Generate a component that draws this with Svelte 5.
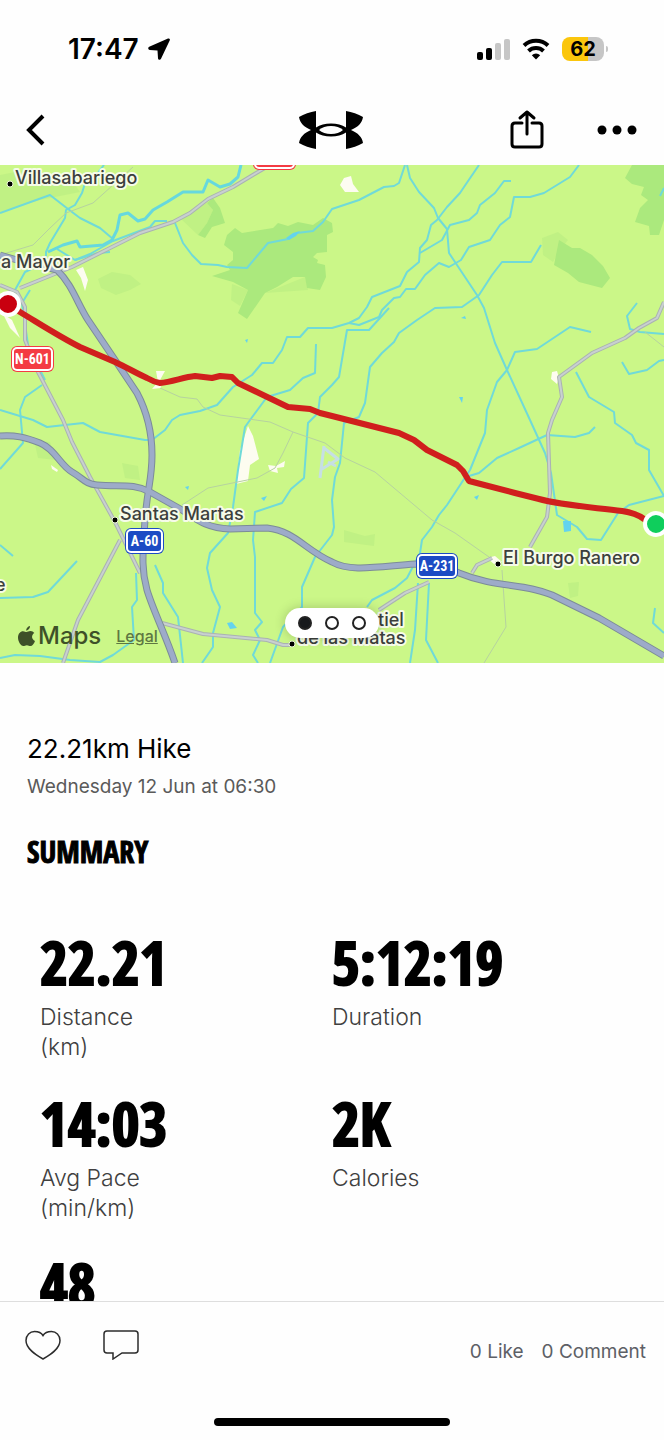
<script>
  let title = "22.21km Hike";
  let date = "Wednesday 12 Jun at 06:30";
  let likes = 0;
  let comments = 0;
  let slide = 0;
  const slides = ["Map", "Elevation", "Pace"];

  const stats = [
    { value: "22.21", label: "Distance", unit: "(km)" },
    { value: "5:12:19", label: "Duration" },
    { value: "14:03", label: "Avg Pace", unit: "(min/km)" },
    { value: "2K", label: "Calories" },
    { value: "48" }
  ];

  const woods = [
    "M212 276 230 270 227 265 233 260 233 252 224 245 227 235 235 228 242 233 273 228 278 223 288 226 298 222 313 225 323 218 332 223 333 232 327 235 327 252 317 253 313 257 318 260 317 263 325 265 326 277 320 290 307 288 305 277 293 277 277 287 265 293 247 319 238 313 248 290 233 282Z",
    "M207 203 213 198 220 208 225 223 212 227 205 238 198 235 207 223 213 210Z",
    "M559 240 572 248 580 248 592 255 603 266 610 278 602 288 579 282 568 273 554 265Z",
    "M632 165 625 178 632 184 644 187 641 195 648 200 640 208 635 222 649 226 650 235 659 235 664 220V165Z"
  ];

  const scrub = [
    "M98 279 112 272 130 275 141 284 130 290 116 295 101 288Z",
    "M542 238 558 232 568 240 560 250 553 262 543 255Z",
    "M122 463 138 466 140 480 125 478Z",
    "M344 530 365 536 375 534 374 546 344 542Z",
    "M0 175 25 170 45 184 70 178 80 192 40 200 0 212Z",
    "M180 218 207 203 213 210 207 223 198 235Z",
    "M232 284 248 290 240 306 231 300Z",
    "M265 293 305 277 308 290Z",
    "M34 440 50 442 56 460 38 458Z",
    "M568 583 579 582 578 596 570 598Z"
  ];

  const towns = [
    "M344 178 351 176 353 184 359 192 345 192 340 185Z",
    "M76 270 83 267 88 280 85 291 81 278Z",
    "M3 314 12 320 20 338 10 328Z",
    "M156 371 165 371 160 380 161 388 152 389 158 382Z",
    "M248 426 253 436 259 459 250 465 248 481 236 484 240 450Z",
    "M268 465 276 466 285 461 284 467 277 468 278 473 270 471Z",
    "M552 372 557 371 559 378 557 384 551 379Z",
    "M51 465 58 470 57 472 52 469Z",
    "M487 558 495 556 502 562 494 564Z"
  ];

  const ponds = [
    "M286 238 293 233 300 231 296 236 289 240Z",
    "M563 521 571 521 571 531 564 532Z",
    "M227 623 232 622 237 628 230 629Z",
    "M461 318 465 316 466 319Z",
    "M459 397 463 397 462 403Z",
    "M474 497 479 495 477 500Z",
    "M261 498 267 496 264 501Z",
    "M185 487 189 486 188 490Z",
    "M245 340 248 339 247 343Z"
  ];

  const streams = [
    "M0 213 50 195 68 209 80 218 100 228 113 239",
    "M104 165 97 174 87 177 82 193 75 205 66 210 65 218 50 243 46 252 46 262 25 272 15 290",
    "M167 221 155 221 150 227 113 241 90 254 75 260 57 249",
    "M75 260 98 253 110 252",
    "M30 290 22 303 28 345 35 360 45 380",
    "M175 223 183 243 192 255 201 264 218 265 227 267 247 268 268 243 288 239 297 233 313 231 323 222 332 209 359 200 384 187 394 186 399 183 405 165",
    "M407 165 410 178 419 192 434 208 438 218 447 229 449 253 457 265 477 295 484 308 495 343 507 370 530 420 545 453 551 473 557 515 577 527 587 539 601 540 618 513 629 505 664 496",
    "M479 165 464 187 460 193 447 207 437 220 431 225 427 240 420 248 419 262 407 272 400 286 372 297 367 307 359 318 349 323 332 328 308 328 300 337 287 337 282 350 273 363 262 363 252 375 233 387 217 405 200 411 180 415 172 420 165 430 152 440 145 440 100 432 83 423 47 427 33 420 0 410",
    "M511 181 504 181 495 193 480 205 477 213 469 220 450 225 442 240 420 253",
    "M579 165 570 177 544 193 530 197 514 197 510 217 500 225 490 240 469 247 461 260 449 267 439 263 425 275 415 289 406 289 400 297 394 298 382 310 379 317 359 325 349 323",
    "M389 308 369 330 347 330 339 377 332 385 320 397 318 413 308 423 304 478 291 489 282 503 255 512 253 540 255 557 255 613 262 622 255 630 260 640 253 655 258 663",
    "M541 245 531 262 502 262 492 275 479 295 462 307 435 308 417 320 399 333 394 342 382 353 370 367 365 403 359 417 344 423 340 463 335 477 332 500 334 527 332 535 315 557 302 587 302 607 283 627 270 663",
    "M591 332 570 327 537 349 515 352 507 370 497 382 487 410 485 433 470 470 447 505 439 515 432 527 422 540 420 553 407 578 395 588 372 600 367 607",
    "M595 427 589 433 575 437 547 435 519 448 497 458 479 473 469 476",
    "M637 303 627 316 630 329 640 332 664 334",
    "M622 362 629 374 647 370 659 361 664 360",
    "M576 372 589 397 614 412 615 423 632 435 636 443 649 450 649 470 664 496",
    "M316 344 315 373 303 378 290 390 267 397 250 420 245 427 238 470 233 507 228 533 210 553 207 568 212 590 220 607 213 633 213 647 202 663",
    "M42 385 25 397 20 410 23 443 0 469",
    "M0 598 33 597 48 592 77 561",
    "M155 565 163 583 163 593 178 617 183 663",
    "M136 573 137 600 132 607 134 640 113 655 100 662 70 660 40 656 15 655 0 658",
    "M0 545 13 556",
    "M418 583 415 630 410 663",
    "M429 583 426 640 438 663",
    "M655 608 653 623 664 633",
    "M664 188 660 196"
  ];

  const river = "M241 165 238 177 230 184 220 187 208 180 203 192 183 192 167 202 153 210 145 219 138 221 128 213 120 215 117 230 112 240 103 245 80 247 77 241 63 245 48 252";

  const tracks = [
    "M160 388 180 397 197 399 203 407 220 415 270 422 293 432 325 443 345 458 375 472 432 520 455 533 489 557",
    "M293 432 283 453 275 468 257 478 208 488 182 505",
    "M502 570 506 627 484 663",
    "M133 167 93 203 66 213 50 228 33 245 0 255",
    "M645 332 664 347"
  ];

  const roads = [
    "M270 165 258 172 233 187 208 199 190 213 173 222 140 233 110 248 72 267 20 288",
    "M0 285 17 292 25 307 25 340 37 370 63 420 72 442 90 477 115 522 140 573",
    "M120 540 78 620 63 663",
    "M162 623 203 634 267 640 283 645 292 645",
    "M664 302 657 318 639 328 625 338 592 353 559 377 562 397 552 420 548 433 550 493 547 517 530 547",
    "M472 573 477 565 492 558",
    "M379 610 405 593 429 582"
  ];

  const motorways = [
    "M0 255 17 260 57 270C72 284 78 305 88 320L115 360 137 393C147 412 152 430 152 455S147 490 145 520C142 560 142 572 147 590C153 610 166 636 175 663",
    "M0 436C15 435 25 437 40 443S60 465 72 472S85 484 97 485C120 487 133 483 150 492L182 510C195 518 205 528 230 529L267 528C295 531 305 550 332 562C350 572 375 567 415 564Q440 564 459 573C495 588 525 583 552 595L599 618 664 656"
  ];

  const route = "M10 305 20 312C40 324 60 337 80 347L115 362C126 367 136 373 147 378Q154 382 160 383C172 382 184 377 195 376L212 378 220 376 232 377 238 383 288 407 310 409 320 413 332 416 399 433 414 440 427 450 457 465 463 471 469 481 515 493 539 499C560 505 590 507 622 511Q636 513 644 519L656 523";

  const places = [
    { name: "Villasabariego", x: 15, y: 184, dot: [10, 184] },
    { name: "a Mayor", x: 1, y: 268 },
    { name: "Santas Martas", x: 120, y: 520, dot: [115, 520] },
    { name: "El Burgo Ranero", x: 503, y: 564, dot: [498, 564] },
    { name: "e", x: -5, y: 591 },
    { name: "tiel", x: 378, y: 626 },
    { name: "de las Matas", x: 297, y: 644, dot: [292, 644] }
  ];

  const shields = [
    { name: "N-601", x: 13, y: 348, w: 39, color: "#f43b43" },
    { name: "", x: 255, y: 146, w: 39, color: "#f43b43" },
    { name: "A-60", x: 127, y: 530, w: 35, color: "#1c4bc4" },
    { name: "A-231", x: 418, y: 555, w: 38, color: "#1c4bc4" }
  ];
</script>

<div class="screen">
  <div class="status">
    <div class="clock">
      17:47
      <svg width="24" height="24" viewBox="0 0 24 24"><path d="M21 1.600 2.200 9.800C.6 10.600 1 12.800 2.800 12.900L10.500 13.400 11 21.200C11.200 23 13.300 23.400 14 21.800L22.800 3.300C23.300 2 22.300 1 21 1.600Z" /></svg>
    </div>
    <div class="indicators">
      <svg width="34" height="22" viewBox="0 0 34 22">
        <rect x="1" y="14" width="6" height="8" rx="2" />
        <rect x="10" y="10" width="6" height="12" rx="2" />
        <rect class="off" x="19" y="5" width="6" height="17" rx="2" />
        <rect class="off" x="28" y="1" width="6" height="21" rx="2" />
      </svg>
      <svg width="28" height="22" viewBox="0 0 28 22">
        <path class="wave" d="M2 7.500A17.500 17.500 0 0 1 26 7.500M6.500 13A11 11 0 0 1 21.500 13" />
        <path d="M14 21.500 9.800 17.300A6 6 0 0 1 18.200 17.300Z" />
      </svg>
      <div class="battery"><span>62</span></div>
    </div>
  </div>

  <header>
    <button class="back" aria-label="Back">
      <svg width="20" height="32" viewBox="0 0 20 32"><path d="M18 2 4 16 18 30" /></svg>
    </button>
    <svg class="logo" width="64" height="38" viewBox="0 0 64 38">
      <path d="M17 0C11 1 5 3 0 6 1 12 5 16 12 19 5 22 1 26 0 32 5 35 11 37 17 38V21.500C21 24 26 25.500 32 25.500S43 24 47 21.500V38C53 37 59 35 64 32 63 26 59 22 52 19 59 16 63 12 64 6 59 3 53 1 47 0V16.500C43 14 38 12.500 32 12.500S21 14 17 16.500Z" />
      <path class="hole" d="M20 19C23 16.500 27 15 32 15S41 16.500 44 19C41 21.500 37 23 32 23S23 21.500 20 19Z" />
    </svg>
    <div class="actions">
      <button aria-label="Share">
        <svg width="34" height="40" viewBox="0 0 34 40"><path d="M12 13H5Q2 13 2 16V34Q2 37 5 37H29Q32 37 32 34V16Q32 13 29 13H22M17 24V2M10 8 17 2 24 8" /></svg>
      </button>
      <button aria-label="More">
        <svg width="40" height="10" viewBox="0 0 40 10"><circle cx="5" cy="5" r="4.500" /><circle cx="20" cy="5" r="4.500" /><circle cx="35" cy="5" r="4.500" /></svg>
      </button>
    </div>
  </header>

  <section class="map">
    <svg class="canvas" viewBox="0 165 664 498">
      <rect class="land" y="165" width="664" height="498" />
      {#each scrub as d}<path class="scrub" {d} />{/each}
      {#each woods as d}<path class="wood" {d} />{/each}
      {#each towns as d}<path class="town" {d} />{/each}
      {#each streams as d}<path class="stream" {d} />{/each}
      <path class="river" d={river} />
      {#each ponds as d}<path class="pond" {d} />{/each}
      <path class="airfield" d="M324 448 338 459 322 469M324 446 320 478M328 462 336 466" />
      {#each tracks as d}<path class="track" {d} />{/each}
      {#each roads as d}<path class="road-edge" {d} /><path class="road" {d} />{/each}
      {#each motorways as d}<path class="motorway-edge" {d} />{/each}
      {#each motorways as d}<path class="motorway" {d} />{/each}
      <path class="route" d={route} />

      {#each shields as s}
        <rect x={s.x - 2} y={s.y - 2} width={s.w + 4} height="26" rx="6" fill={s.color} />
        <rect class="shield" x={s.x} y={s.y} width={s.w} height="22" rx="4" fill={s.color} />
        {#if s.name}<text class="ref" x={s.x + s.w / 2} y={s.y + 16}>{s.name}</text>{/if}
      {/each}
      {#each places as p}
        {#if p.dot}<circle class="spot" cx={p.dot[0]} cy={p.dot[1]} r="3" />{/if}
        <text class="place" x={p.x} y={p.y}>{p.name}</text>
      {/each}

      <circle class="end" cx="8" cy="304" r="11" fill="#c9000f" />
      <circle class="end" cx="656" cy="524" r="11" fill="#0fce5c" />
    </svg>
    <div class="credit">
      <svg width="17" height="21" viewBox="0 0 17 21">
        <path d="M12 0C12.200 2 10.400 4.500 8.200 4.500 8 2.500 9.800.4 12 0ZM8.500 6C9.500 6 10.500 5 12.500 5 14 5 15.400 5.800 16.300 7 13 9 13.500 13.500 17 14.900 16 17.500 14.300 20 12.500 20 11.100 20 10.600 19.200 8.900 19.200S6.600 20 5.300 20C2.600 20 0 15.300 0 11.500 0 7.500 2.500 5.200 5 5.200 6.600 5.200 7.700 6 8.500 6Z" />
      </svg>
      <span>Maps</span>
      <a href="#legal">Legal</a>
    </div>
    <div class="pager">
      {#each slides as name, i}
        <button class:active={i == slide} aria-label={name} on:click={() => (slide = i)}></button>
      {/each}
    </div>
  </section>

  <main>
    <h1>{title}</h1>
    <p class="date">{date}</p>
    <h2>SUMMARY</h2>
    <div class="stats">
      {#each stats as stat}
        <div class="stat">
          <div class="value">{stat.value}</div>
          {#if stat.label}<div class="label">{stat.label}</div>{/if}
          {#if stat.unit}<div class="label">{stat.unit}</div>{/if}
        </div>
      {/each}
    </div>
  </main>

  <footer>
    <div class="bar">
      <button aria-label="Like" on:click={() => (likes = likes ? 0 : 1)}>
        <svg width="36" height="30" viewBox="0 0 36 30"><path d="M18 29C11 25 1 19 1 10.500 1 5 5 1.500 9.500 1.500 13.500 1.500 16.500 3 18 5.500 19.500 3 22.500 1.500 26.500 1.500 31 1.500 35 5 35 10.500 35 19 25 25 18 29Z" /></svg>
      </button>
      <button aria-label="Comment">
        <svg width="36" height="30" viewBox="0 0 36 30"><path d="M4 1H32Q35 1 35 4V20Q35 23 32 23H19L10 29V23H4Q1 23 1 20V4Q1 1 4 1Z" /></svg>
      </button>
      <div class="counts">
        <a href="#likes">{likes} Like</a>
        <a href="#comments">{comments} Comment</a>
      </div>
    </div>
    <div class="home"></div>
  </footer>
</div>

<style>
  :global(body) {
    background: #fefefe;
  }

  .screen {
    display: flex;
    flex-direction: column;
    height: 100vh;
    overflow: hidden;
    color: #000;
    font-family: Inter, "Liberation Sans", sans-serif;
  }

  button {
    display: flex;
    padding: 0;
    border: 0;
    background: none;
    cursor: pointer;
  }

  a {
    color: inherit;
    text-decoration: none;
  }

  svg {
    display: block;
  }

  .status {
    display: flex;
    justify-content: space-between;
    align-items: center;
    flex: none;
    height: 98px;
    padding: 0 60px 0 68px;
    box-sizing: border-box;
  }

  .clock {
    display: flex;
    align-items: center;
    gap: 8px;
    font-size: 28px;
    font-weight: 600;
  }

  .indicators {
    display: flex;
    align-items: center;
    gap: 12px;
  }

  .off {
    fill: #c6c6c6;
  }

  .wave {
    fill: none;
    stroke: #000;
    stroke-width: 4;
  }

  .battery {
    position: relative;
    width: 42px;
    height: 24px;
    border-radius: 8px;
    background: linear-gradient(90deg, #fbc60c 62%, #c6c6c6 62%);
    font-size: 20px;
    font-weight: 700;
    line-height: 24px;
    text-align: center;
  }

  .battery::after {
    content: "";
    position: absolute;
    top: 9px;
    right: -4px;
    width: 2px;
    height: 6px;
    border-radius: 0 2px 2px 0;
    background: #c6c6c6;
  }

  header {
    display: grid;
    grid-template-columns: 1fr auto 1fr;
    align-items: center;
    flex: none;
    height: 67px;
    padding: 0 27px 4px 25px;
    box-sizing: border-box;
  }

  .back path,
  .actions path {
    fill: none;
    stroke: #000;
    stroke-width: 4;
  }

  .actions path {
    stroke-width: 3;
    stroke-linecap: round;
    stroke-linejoin: round;
  }

  .actions {
    display: flex;
    justify-content: flex-end;
    align-items: center;
    gap: 53px;
  }

  .hole {
    fill: #fefefe;
  }

  .map {
    position: relative;
    flex: none;
  }

  .canvas {
    width: 100%;
    height: auto;
  }

  .canvas path {
    stroke-linejoin: round;
  }

  .land {
    fill: #cbf788;
  }

  .scrub {
    fill: #c0f184;
  }

  .wood {
    fill: #abe97d;
  }

  .town {
    fill: #fdfcf0;
  }

  .pond {
    fill: #63d3ee;
  }

  .stream,
  .river,
  .track,
  .road,
  .road-edge,
  .motorway,
  .motorway-edge,
  .airfield,
  .route {
    fill: none;
  }

  .stream {
    stroke: #70dad8;
    stroke-width: 2;
  }

  .river {
    stroke: #66d8de;
    stroke-width: 3;
  }

  .airfield {
    stroke: #c6dfe4;
    stroke-width: 3;
  }

  .track {
    stroke: #b6d2a0;
    stroke-width: 1;
  }

  .road-edge {
    stroke: #aab2b2;
    stroke-width: 4;
  }

  .road {
    stroke: #c8d0d0;
    stroke-width: 2;
  }

  .motorway-edge {
    stroke: #7c8c98;
    stroke-width: 7;
  }

  .motorway {
    stroke: #9dabc9;
    stroke-width: 5;
  }

  .route {
    stroke: #d01f1d;
    stroke-width: 6;
  }

  .shield {
    stroke: #fff;
    stroke-width: 2;
  }

  .ref {
    fill: #fff;
    font-family: "Roboto Condensed", "Open Sans Condensed", "Liberation Sans", sans-serif;
    font-size: 14px;
    font-weight: 700;
    text-anchor: middle;
  }

  .place {
    fill: #3c403c;
    stroke: #f6fbe9;
    stroke-width: 4;
    stroke-linejoin: round;
    paint-order: stroke;
    font-size: 18px;
    font-weight: 500;
  }

  .spot {
    fill: #000;
    stroke: #eef8d8;
    stroke-width: 1;
  }

  .end {
    stroke: #fff;
    stroke-width: 4;
  }

  .credit {
    position: absolute;
    left: 18px;
    bottom: 12px;
    display: flex;
    align-items: center;
    gap: 3px;
    color: #3e5128;
    font-size: 24px;
    font-weight: 500;
    line-height: 30px;
  }

  .credit path {
    fill: #3e5128;
  }

  .credit a {
    margin-left: 12px;
    color: #5e7742;
    font-size: 16px;
    text-decoration: underline;
  }

  .pager {
    position: absolute;
    left: 50%;
    bottom: 25px;
    display: flex;
    gap: 13px;
    padding: 8px 13px;
    border-radius: 15px;
    background: #fff;
    box-shadow: 0 0 12px rgba(0, 0, 0, 0.2);
    transform: translateX(-50%);
  }

  .pager button {
    width: 14px;
    height: 14px;
    border: 2px solid #222;
    border-radius: 50%;
  }

  .pager .active {
    background: #17191c;
  }

  main {
    flex: 1;
    min-height: 0;
    padding: 69px 27px 0;
    overflow: hidden;
  }

  h1 {
    margin: 0;
    font-size: 26px;
    font-weight: 400;
    line-height: 34px;
  }

  .date {
    margin: 6px 0 0;
    color: #5a5a5a;
    font-size: 19px;
    line-height: 30px;
  }

  h2 {
    margin: 30px 0 0;
    font-family: "Open Sans Condensed", "Roboto Condensed", "Liberation Sans", sans-serif;
    font-size: 30px;
    font-weight: 700;
    line-height: 40px;
    -webkit-text-stroke: 1px #000;
  }

  .stats {
    display: grid;
    grid-template-columns: 1fr 1fr;
    margin: 50px 13px 0 13px;
  }

  .stat {
    min-height: 161px;
  }

  .value {
    font-family: "Open Sans Condensed", "Roboto Condensed", "Liberation Sans", sans-serif;
    font-size: 60px;
    font-weight: 700;
    line-height: 80px;
    -webkit-text-stroke: 2px #000;
  }

  .label {
    color: #404040;
    font-size: 23px;
    font-weight: 300;
    line-height: 30px;
  }

  footer {
    flex: none;
    border-top: 1px solid #dedede;
    background: #fefefe;
  }

  .bar {
    display: flex;
    align-items: center;
    gap: 42px;
    height: 85px;
    padding: 0 18px 0 25px;
  }

  .bar path {
    fill: none;
    stroke: #2c2c2c;
    stroke-width: 1.500;
  }

  .counts {
    display: flex;
    gap: 18px;
    margin-left: auto;
    padding-top: 14px;
    color: #5d6066;
    font-size: 19px;
  }

  .home {
    width: 236px;
    height: 8px;
    margin: 31px auto 14px;
    border-radius: 4px;
    background: #000;
  }
</style>
